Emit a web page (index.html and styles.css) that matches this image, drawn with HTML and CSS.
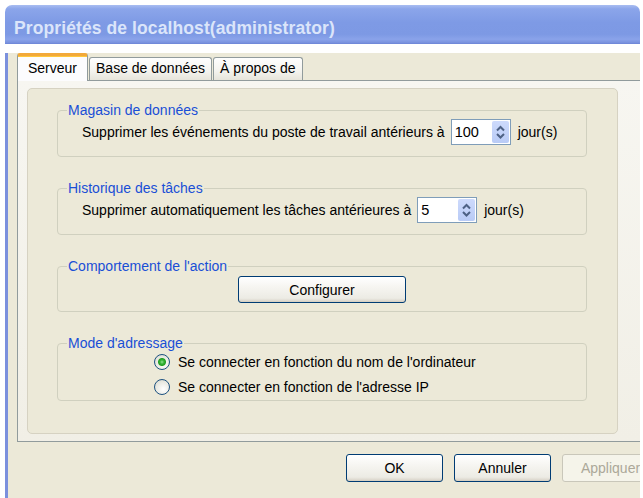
FILE: index.html
```html
<!DOCTYPE html>
<html lang="fr">
<head>
  <meta charset="utf-8">
  <title>Propriétés de localhost(administrator)</title>
  <link rel="stylesheet" href="styles.css">
</head>
<body>
<div class="window">
  <div class="titlebar">Propriétés de localhost(administrator)</div>
  <div class="client">
    <div class="tabs">
      <div class="tab active">Serveur</div>
      <div class="tab">Base de données</div>
      <div class="tab">À propos de</div>
    </div>
    <div class="panel">
      <div class="page">
        <fieldset class="group">
          <legend>Magasin de données</legend>
          <div class="row">
            <span>Supprimer les événements du poste de travail antérieurs à</span>
            <div class="spin">
              <span class="spin-value">100</span>
              <span class="spin-btn">
                <svg width="17" height="22" viewBox="0 0 17 22"><polyline points="5,9.5 8.5,6 12,9.5" /><polyline points="5,13 8.5,16.5 12,13" /></svg>
              </span>
            </div>
            <span>jour(s)</span>
          </div>
        </fieldset>
        <fieldset class="group">
          <legend>Historique des tâches</legend>
          <div class="row">
            <span>Supprimer automatiquement les tâches antérieures à</span>
            <div class="spin">
              <span class="spin-value">5</span>
              <span class="spin-btn">
                <svg width="17" height="22" viewBox="0 0 17 22"><polyline points="5,9.5 8.5,6 12,9.5" /><polyline points="5,13 8.5,16.5 12,13" /></svg>
              </span>
            </div>
            <span>jour(s)</span>
          </div>
        </fieldset>
        <fieldset class="group action">
          <legend>Comportement de l'action</legend>
          <div class="center">
            <button class="btn configure">Configurer</button>
          </div>
        </fieldset>
        <fieldset class="group mode">
          <legend>Mode d'adressage</legend>
          <label class="radio-row"><span class="radio checked"></span>Se connecter en fonction du nom de l'ordinateur</label>
          <label class="radio-row"><span class="radio"></span>Se connecter en fonction de l'adresse IP</label>
        </fieldset>
      </div>
    </div>
    <div class="buttons">
      <button class="btn">OK</button>
      <button class="btn">Annuler</button>
      <button class="btn disabled">Appliquer</button>
    </div>
  </div>
</div>
</body>
</html>
```

FILE: styles.css
```css
html, body {
    margin: 0;
    background: #fff;
    overflow: hidden;
}

body {
    font-family: "Liberation Sans", Arial, sans-serif;
    font-size: 14px;
    color: #000;
}

.window {
    margin: 5px 0 0 5px;
    width: 635px;
    overflow: hidden;
}

.titlebar {
    box-sizing: border-box;
    height: 39px;
    padding: 7px 0 0 9px;
    line-height: 32px;
    border-radius: 7px 7px 0 0;
    background: linear-gradient(#a9bdf1, #8ba5ea 10%, #7e9ae5 45%, #7d99e4 75%, #8aa3ea 88%, #7a93df 96%, #6c84d6);
    color: #dbe5fa;
    font-weight: bold;
    font-size: 17.5px;
    letter-spacing: 0.1px;
    white-space: nowrap;
}

.client {
    box-sizing: border-box;
    height: 451px;
    background: #ece9d8;
    border-left: 3px solid #7b90dd;
    border-bottom: 4px solid #6f86d8;
}

.tabs {
    display: flex;
    align-items: flex-end;
    height: 27px;
    margin-top: 9px;
    padding-left: 9px;
    gap: 1px;
}

.tab {
    box-sizing: border-box;
    height: 23px;
    line-height: 21px;
    padding: 0 6px;
    border: 1px solid #919b9c;
    border-bottom: none;
    border-radius: 3px 3px 0 0;
    background: linear-gradient(#fefefe, #f4f3ee 60%, #e6e4da);
    white-space: nowrap;
}

.tab.active {
    position: relative;
    z-index: 1;
    height: 28px;
    line-height: 24px;
    margin-bottom: -1px;
    padding: 0 10px;
    background: #fcfcfe;
    border-top: 3px solid #f2a93a;
    box-shadow: inset 0 1px 0 #ffc83c;
}

.panel {
    box-sizing: border-box;
    width: 660px;
    height: 362px;
    margin-left: 9px;
    padding: 7px 0 0 9px;
    border: 1px solid #919b9c;
    background: linear-gradient(#f7f6f1, #f1efe6);
}

.page {
    box-sizing: border-box;
    width: 591px;
    height: 346px;
    padding: 13px 30px 0 29px;
    border: 1px solid #d6d2c2;
    border-radius: 5px;
    background: #ece9d8;
    display: flex;
    flex-direction: column;
    gap: 23px;
}

.group {
    margin: 0;
    min-width: 0;
    padding: 1px 0 11px 0;
    border: 1px solid #d0d0bf;
    border-radius: 4px;
}

.group legend {
    margin-left: 9px;
    padding: 0 1px;
    line-height: 16px;
    color: #1a4fd6;
}

.group.action {
    padding: 2px 0 8px;
}

.group.mode {
    padding: 1px 0 3px 96px;
}

.group.mode legend {
    margin-left: -87px;
}

.row {
    display: flex;
    align-items: center;
    gap: 6px;
    height: 26px;
    padding-left: 24px;
    white-space: nowrap;
}

.spin {
    box-sizing: border-box;
    width: 60px;
    height: 26px;
    display: flex;
    align-items: stretch;
    border: 1px solid #7f9db9;
    background: #fff;
    padding: 1px;
    margin-right: 1px;
}

.spin-value {
    flex: 1;
    padding-left: 2px;
    line-height: 22px;
    font-size: 14.5px;
}

.spin-btn {
    width: 17px;
    border-radius: 2px;
    background: linear-gradient(#cddafc, #b9cbf6);
}

.spin-btn svg {
    display: block;
    fill: none;
    stroke: #4d6185;
    stroke-width: 2;
}

.center {
    display: flex;
    justify-content: center;
}

.btn {
    box-sizing: border-box;
    flex-shrink: 0;
    height: 28px;
    width: 97px;
    font: inherit;
    color: #000;
    border: 1px solid #003c74;
    border-radius: 3px;
    background: linear-gradient(#ffffff, #f6f5f1 40%, #ecebe4 85%, #d6d0c5);
    box-shadow: inset 0 -1px 0 #d8d2c4;
}

.btn.configure {
    width: 168px;
    height: 27px;
}

.btn.disabled {
    color: #aca899;
    border-color: #c9c7ba;
    background: #f5f4ea;
    box-shadow: none;
}

.radio-row {
    display: flex;
    align-items: center;
    gap: 8px;
    height: 20px;
    white-space: nowrap;
}

.radio-row + .radio-row {
    margin-top: 5px;
}

.radio {
    box-sizing: border-box;
    width: 16px;
    height: 16px;
    border-radius: 50%;
    border: 1px solid #1c5180;
    background: radial-gradient(circle at 60% 65%, #ffffff, #e8e8e0 60%, #cfcfc5);
}

.radio.checked {
    background: radial-gradient(circle, #8fe28f 0, #36b336 2px, #219e21 3.5px, transparent 4.5px),
                radial-gradient(circle at 60% 65%, #ffffff, #e8e8e0 60%, #cfcfc5);
}

.buttons {
    display: flex;
    gap: 11px;
    margin-top: 12px;
    padding-left: 338px;
}
```
